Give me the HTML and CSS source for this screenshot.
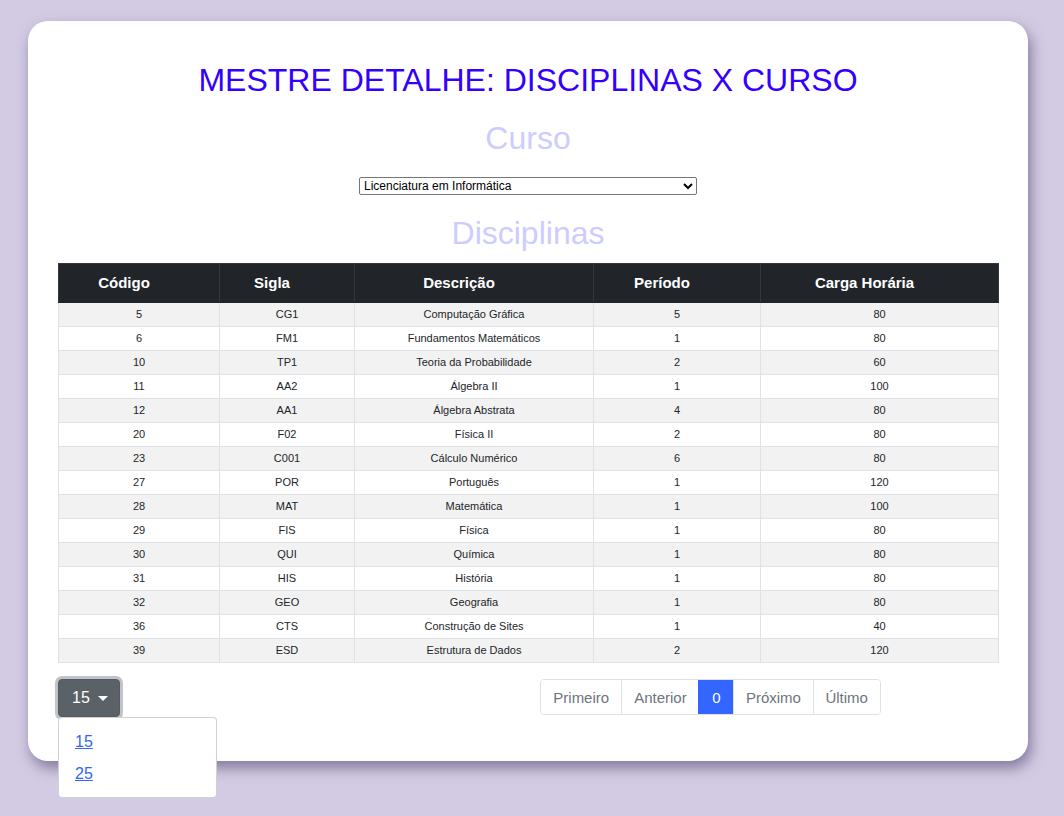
FILE: index.html
```html
<!DOCTYPE html>
<html lang="pt-BR">
<head>
<meta charset="utf-8">
<title>Mestre Detalhe</title>
<link rel="stylesheet" href="styles.css">
</head>
<body>
<main class="card">
  <h1 class="title">MESTRE DETALHE: DISCIPLINAS X CURSO</h1>
  <h2 class="subtitle sub-curso">Curso</h2>
  <select class="course-select">
    <option>Licenciatura em Informática</option>
  </select>
  <h2 class="subtitle sub-disc">Disciplinas</h2>
  <table class="grid">
    <colgroup>
      <col class="c1"><col class="c2"><col class="c3"><col class="c4"><col class="c5">
    </colgroup>
    <thead>
      <tr><th>Código</th><th>Sigla</th><th>Descrição</th><th>Período</th><th>Carga Horária</th></tr>
    </thead>
    <tbody>
      <tr><td>5</td><td>CG1</td><td>Computação Gráfica</td><td>5</td><td>80</td></tr>
      <tr><td>6</td><td>FM1</td><td>Fundamentos Matemáticos</td><td>1</td><td>80</td></tr>
      <tr><td>10</td><td>TP1</td><td>Teoria da Probabilidade</td><td>2</td><td>60</td></tr>
      <tr><td>11</td><td>AA2</td><td>Álgebra II</td><td>1</td><td>100</td></tr>
      <tr><td>12</td><td>AA1</td><td>Álgebra Abstrata</td><td>4</td><td>80</td></tr>
      <tr><td>20</td><td>F02</td><td>Física II</td><td>2</td><td>80</td></tr>
      <tr><td>23</td><td>C001</td><td>Cálculo Numérico</td><td>6</td><td>80</td></tr>
      <tr><td>27</td><td>POR</td><td>Português</td><td>1</td><td>120</td></tr>
      <tr><td>28</td><td>MAT</td><td>Matemática</td><td>1</td><td>100</td></tr>
      <tr><td>29</td><td>FIS</td><td>Física</td><td>1</td><td>80</td></tr>
      <tr><td>30</td><td>QUI</td><td>Química</td><td>1</td><td>80</td></tr>
      <tr><td>31</td><td>HIS</td><td>História</td><td>1</td><td>80</td></tr>
      <tr><td>32</td><td>GEO</td><td>Geografia</td><td>1</td><td>80</td></tr>
      <tr><td>36</td><td>CTS</td><td>Construção de Sites</td><td>1</td><td>40</td></tr>
      <tr><td>39</td><td>ESD</td><td>Estrutura de Dados</td><td>2</td><td>120</td></tr>
    </tbody>
  </table>
  <div class="bottom">
    <div class="left-col">
      <div class="dropdown">
        <button class="size-btn" type="button">15<span class="caret"></span></button>
        <div class="menu">
          <a href="#" class="menu-item">15</a>
          <a href="#" class="menu-item">25</a>
        </div>
      </div>
    </div>
    <div class="right-col">
      <nav class="pager">
        <a href="#" class="page">Primeiro</a>
        <a href="#" class="page">Anterior</a>
        <a href="#" class="page active">0</a>
        <a href="#" class="page">Próximo</a>
        <a href="#" class="page">Último</a>
      </nav>
    </div>
  </div>
</main>
</body>
</html>
```
FILE: styles.css
```css
html, body {
  margin: 0;
  padding: 0;
}
body {
  background: #d3cbe3;
  font-family: "Liberation Sans", Arial, sans-serif;
  color: #212529;
  width: 1064px;
  height: 816px;
  overflow: hidden;
}
.card {
  box-sizing: border-box;
  width: 1000px;
  height: 740px;
  margin: 21px 0 0 28px;
  padding: 0 30px;
  background: #fff;
  border-radius: 20px;
  box-shadow: 3px 7px 14px rgba(70, 55, 100, 0.55);
  display: flex;
  flex-direction: column;
}
.title {
  margin: 41px 0 0;
  font-size: 32px;
  line-height: 37px;
  font-weight: normal;
  text-align: center;
  color: #3300ff;
}
.subtitle {
  margin: 0;
  font-size: 32px;
  line-height: 37px;
  font-weight: normal;
  text-align: center;
  color: #ccccff;
}
.sub-curso { margin-top: 21px; }
.sub-disc { margin-top: 20px; }
.course-select {
  display: block;
  margin: 20px auto 0;
  width: 338px;
  height: 18px;
  font-family: "Liberation Sans", Arial, sans-serif;
  font-size: 12px;
  color: #000;
  background: #fff;
  border: 1px solid #767676;
  border-radius: 2px;
  padding: 0;
}
.grid {
  margin-top: 11px;
  width: 940px;
  border-collapse: collapse;
  table-layout: fixed;
  text-align: center;
}
.c1 { width: 161px; }
.c2 { width: 135px; }
.c3 { width: 239px; }
.c4 { width: 167px; }
.c5 { width: 238px; }
.grid th {
  background: #212529;
  color: #fff;
  font-size: 15px;
  font-weight: bold;
  height: 36px;
  padding: 0 30px 2px 0;
  border: 1px solid #32383e;
  border-bottom-color: #212529;
  vertical-align: middle;
}
.grid td {
  font-size: 11px;
  height: 22px;
  padding: 0 0 1px;
  border: 1px solid #dee2e6;
  vertical-align: middle;
}
.grid tbody tr:nth-child(odd) td {
  background: #f2f2f2;
}
.bottom {
  margin-top: 16px;
  display: grid;
  grid-template-columns: 470px 470px;
}
.dropdown {
  position: relative;
  width: 62px;
}
.size-btn {
  box-sizing: border-box;
  width: 62px;
  height: 38px;
  padding: 0 13px;
  display: flex;
  align-items: center;
  background: #5a6268;
  color: #fff;
  border: 1px solid #545b62;
  border-radius: 4px;
  font-family: "Liberation Sans", Arial, sans-serif;
  font-size: 16px;
  box-shadow: 0 0 0 3px rgba(130, 138, 145, 0.5);
}
.caret {
  margin-left: 8px;
  width: 0;
  height: 0;
  border-top: 5px solid #fff;
  border-left: 5px solid transparent;
  border-right: 5px solid transparent;
}
.menu {
  position: absolute;
  top: 38px;
  left: 0;
  box-sizing: border-box;
  width: 159px;
  height: 81px;
  background: #fff;
  border: 1px solid rgba(0, 0, 0, 0.18);
  border-radius: 4px;
  padding: 8px 0 0 16px;
  display: flex;
  flex-direction: column;
  align-items: flex-start;
}
.menu-item {
  font-size: 16px;
  line-height: 32px;
  color: #3366ee;
  text-decoration: underline;
}
.right-col {
  padding-left: 12px;
  display: flex;
  align-items: flex-start;
}
.pager {
  display: flex;
  border: 1px solid #dee2e6;
  border-radius: 4px;
  overflow: hidden;
}
.page {
  height: 34px;
  display: flex;
  align-items: center;
  padding: 0 11.75px;
  font-size: 15px;
  color: #6c757d;
  text-decoration: none;
  border-left: 1px solid #dee2e6;
  background: #fff;
}
.page:first-child {
  border-left: none;
  padding: 0 12.3px;
}
.page.active {
  background: #3366ff;
  color: #fff;
  border-left-color: #3366ff;
  padding: 0 12.7px;
}
```
